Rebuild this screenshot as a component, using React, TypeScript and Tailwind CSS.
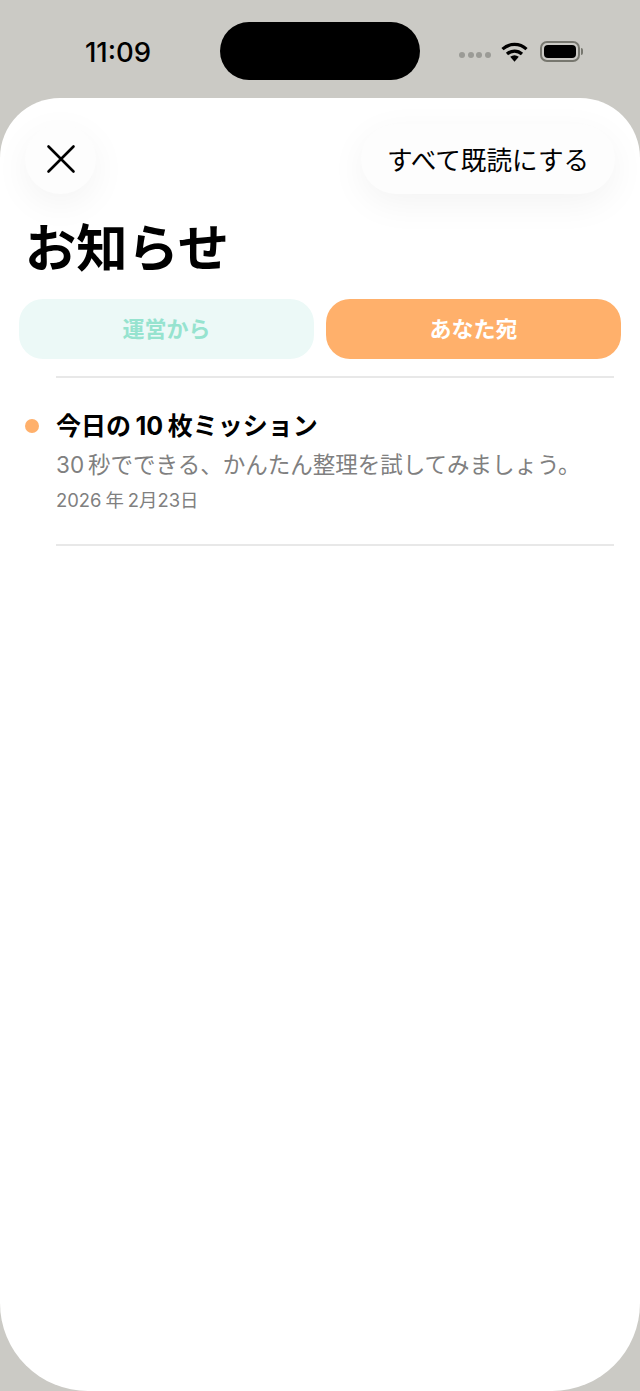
import React from "react";

const font = { fontFamily: '"Inter", "Noto Sans CJK JP", sans-serif' };

function Wifi() {
  return (
    <svg width="27" height="21" viewBox="0 0 27 21" fill="none" stroke="#000">
      <path d="M1.500 8.200A17.500 17.500 0 0 1 25.500 8.200" strokeWidth="3.200" />
      <path d="M6 13A11 11 0 0 1 21 13" strokeWidth="3.200" />
      <path d="M9.200 15.800A7 7 0 0 1 17.800 15.800L13.500 20.800Z" fill="#000" stroke="none" />
    </svg>
  );
}

function Battery() {
  return (
    <div className="flex items-center gap-[1px]">
      <div className="w-[40px] h-[21px] rounded-[7px] border-2 border-[#77776f] p-[2px]">
        <div className="w-full h-full rounded-[4px] bg-black" />
      </div>
      <div className="w-[2px] h-[7px] rounded-r-full bg-[#77776f]" />
    </div>
  );
}

export default function App() {
  return (
    <div className="w-[640px] h-[1391px] bg-[#cbcac5] flex flex-col overflow-hidden" style={font}>
      <div className="h-[98px] shrink-0 flex items-start">
        <div className="w-[236px] pt-[35px] text-center text-[27.500px] leading-[34px] font-[550] text-black">11:09</div>
        <div className="w-[200px] h-[58px] mt-[22px] -ml-[16px] rounded-[29px] bg-black" />
        <div className="flex items-center mt-[41px] ml-[39px]">
          <div className="flex gap-[2.500px] mt-[7px]">
            <div className="w-[6px] h-[6px] rounded-full bg-[#9b9b96]" />
            <div className="w-[6px] h-[6px] rounded-full bg-[#9b9b96]" />
            <div className="w-[6px] h-[6px] rounded-full bg-[#9b9b96]" />
            <div className="w-[6px] h-[6px] rounded-full bg-[#9b9b96]" />
          </div>
          <div className="ml-[10px]"><Wifi /></div>
          <div className="ml-[12px]"><Battery /></div>
        </div>
      </div>

      <div className="flex-1 bg-white rounded-t-[60px] rounded-b-[88px] flex flex-col">
        <div className="flex justify-between pt-[26px] pl-[25px] pr-[25px]">
          <button className="w-[71px] h-[70px] rounded-full bg-[#fdfdfd] flex items-center justify-center shadow-[0_10px_36px_rgba(0,0,0,0.05)]">
            <svg width="30" height="30" viewBox="0 0 30 30" fill="none" stroke="#000" strokeWidth="2.600" strokeLinecap="round">
              <path d="M2.500 2.500L27.500 27.500M27.500 2.500L2.500 27.500" />
            </svg>
          </button>
          <button className="w-[254px] h-[70px] rounded-[35px] bg-[#fdfdfd] text-[25.600px] pt-[4px] text-black flex items-center justify-center shadow-[0_10px_36px_rgba(0,0,0,0.05)]">
            すべて既読にする
          </button>
        </div>

        <h1 className="mt-[22px] ml-[25px] text-[51.300px] leading-[64px] font-bold text-black">お知らせ</h1>

        <div className="mt-[19px] px-[19px] grid grid-cols-2 gap-[12px]">
          <div className="h-[60px] rounded-[24px] bg-[#ecf9f7] text-[#96e3cf] text-[22px] font-bold flex items-center justify-center">運営から</div>
          <div className="h-[60px] rounded-[24px] bg-[#ffb06b] text-white text-[22px] font-bold flex items-center justify-center">あなた宛</div>
        </div>

        <div className="mt-[17px] ml-[56px] mr-[26px] h-[2px] bg-[#e8e8e8]" />

        <div className="flex pl-[25px] pr-[26px]">
          <div className="w-[14px] h-[14px] mt-[41px] rounded-full bg-[#ffb06b] shrink-0" />
          <div className="ml-[17px] flex-1 pt-[31px]">
            <div className="text-[25px] leading-[34px] font-bold text-black whitespace-nowrap">今日の<span className="mx-[4.500px]">10</span>枚ミッション</div>
            <div className="mt-[6px] text-[22.500px] leading-[32px] text-[#808080] whitespace-nowrap"><span className="mr-[4px]">30</span>秒でできる、かんたん整理を試してみましょう。</div>
            <div className="mt-[6px] text-[18.400px] leading-[26px] text-[#808080] whitespace-nowrap">2026<span className="mx-[4px]">年</span>2月23日</div>
            <div className="mt-[31px] h-[2px] bg-[#e8e8e8]" />
          </div>
        </div>
      </div>
    </div>
  );
}
